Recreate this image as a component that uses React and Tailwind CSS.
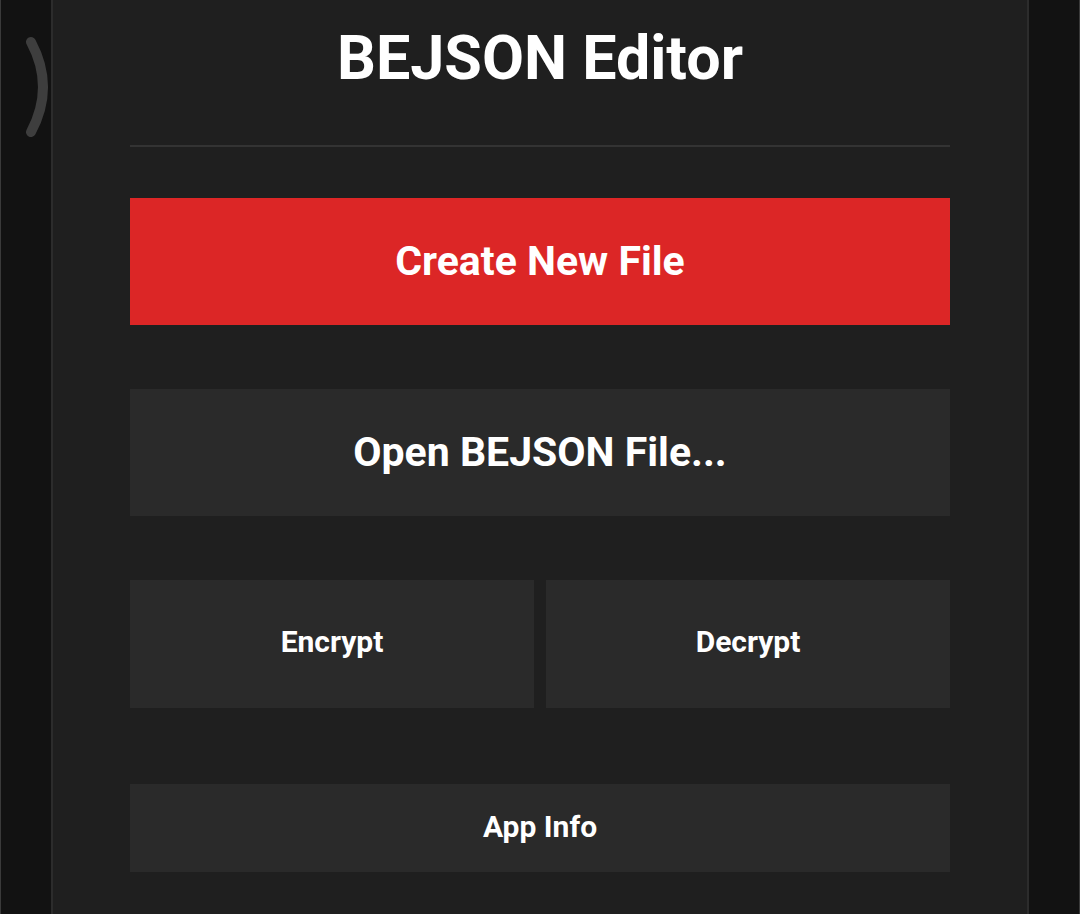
import React from "react";

const ActionButton = ({ label, className }) => (
  <button
    className={`flex items-center justify-center font-bold text-white ${className}`}
  >
    {label}
  </button>
);

export default function App() {
  return (
    <div
      className="flex h-[914px] w-[1080px] overflow-hidden bg-[#121212]"
      style={{ fontFamily: "Roboto, 'Noto Sans', sans-serif" }}
    >
      {/* left gutter */}
      <div className="relative h-full w-[51px] shrink-0 border-l border-[#3a3a3a] bg-[#121212]">
        <svg
          className="absolute left-0 top-0"
          width="51"
          height="150"
          viewBox="0 0 51 150"
        >
          <path
            d="M30 42 Q54 87 30 132"
            fill="none"
            stroke="#3e3e3e"
            strokeWidth="10"
            strokeLinecap="round"
          />
        </svg>
      </div>

      {/* main panel */}
      <main className="flex h-full w-[978px] shrink-0 flex-col items-center border-x-2 border-[#2c2c2c] bg-[#1f1f1f]">
        <div className="flex w-[820px] flex-col">
          <h1 className="pt-[20px] text-center text-[61px] font-bold leading-[76px] text-white">
            BEJSON Editor
          </h1>
          <div className="mt-[49px] h-[2px] bg-[#333333]" />

          <ActionButton
            label="Create New File"
            className="mt-[51px] h-[127px] bg-[#dc2626] text-[41px]"
          />
          <ActionButton
            label="Open BEJSON File..."
            className="mt-[64px] h-[127px] bg-[#2a2a2a] text-[41px]"
          />

          <div className="mt-[64px] grid grid-cols-2 gap-[12px]">
            <ActionButton
              label="Encrypt"
              className="h-[128px] bg-[#2a2a2a] pb-[5px] text-[30px]"
            />
            <ActionButton
              label="Decrypt"
              className="h-[128px] bg-[#2a2a2a] pb-[5px] text-[30px]"
            />
          </div>

          <ActionButton
            label="App Info"
            className="mt-[76px] h-[88px] bg-[#2a2a2a] pb-[3px] text-[30px]"
          />
        </div>
      </main>

      {/* right gutter */}
      <div className="h-full flex-1 border-r border-[#3a3a3a] bg-[#121212]" />
    </div>
  );
}
